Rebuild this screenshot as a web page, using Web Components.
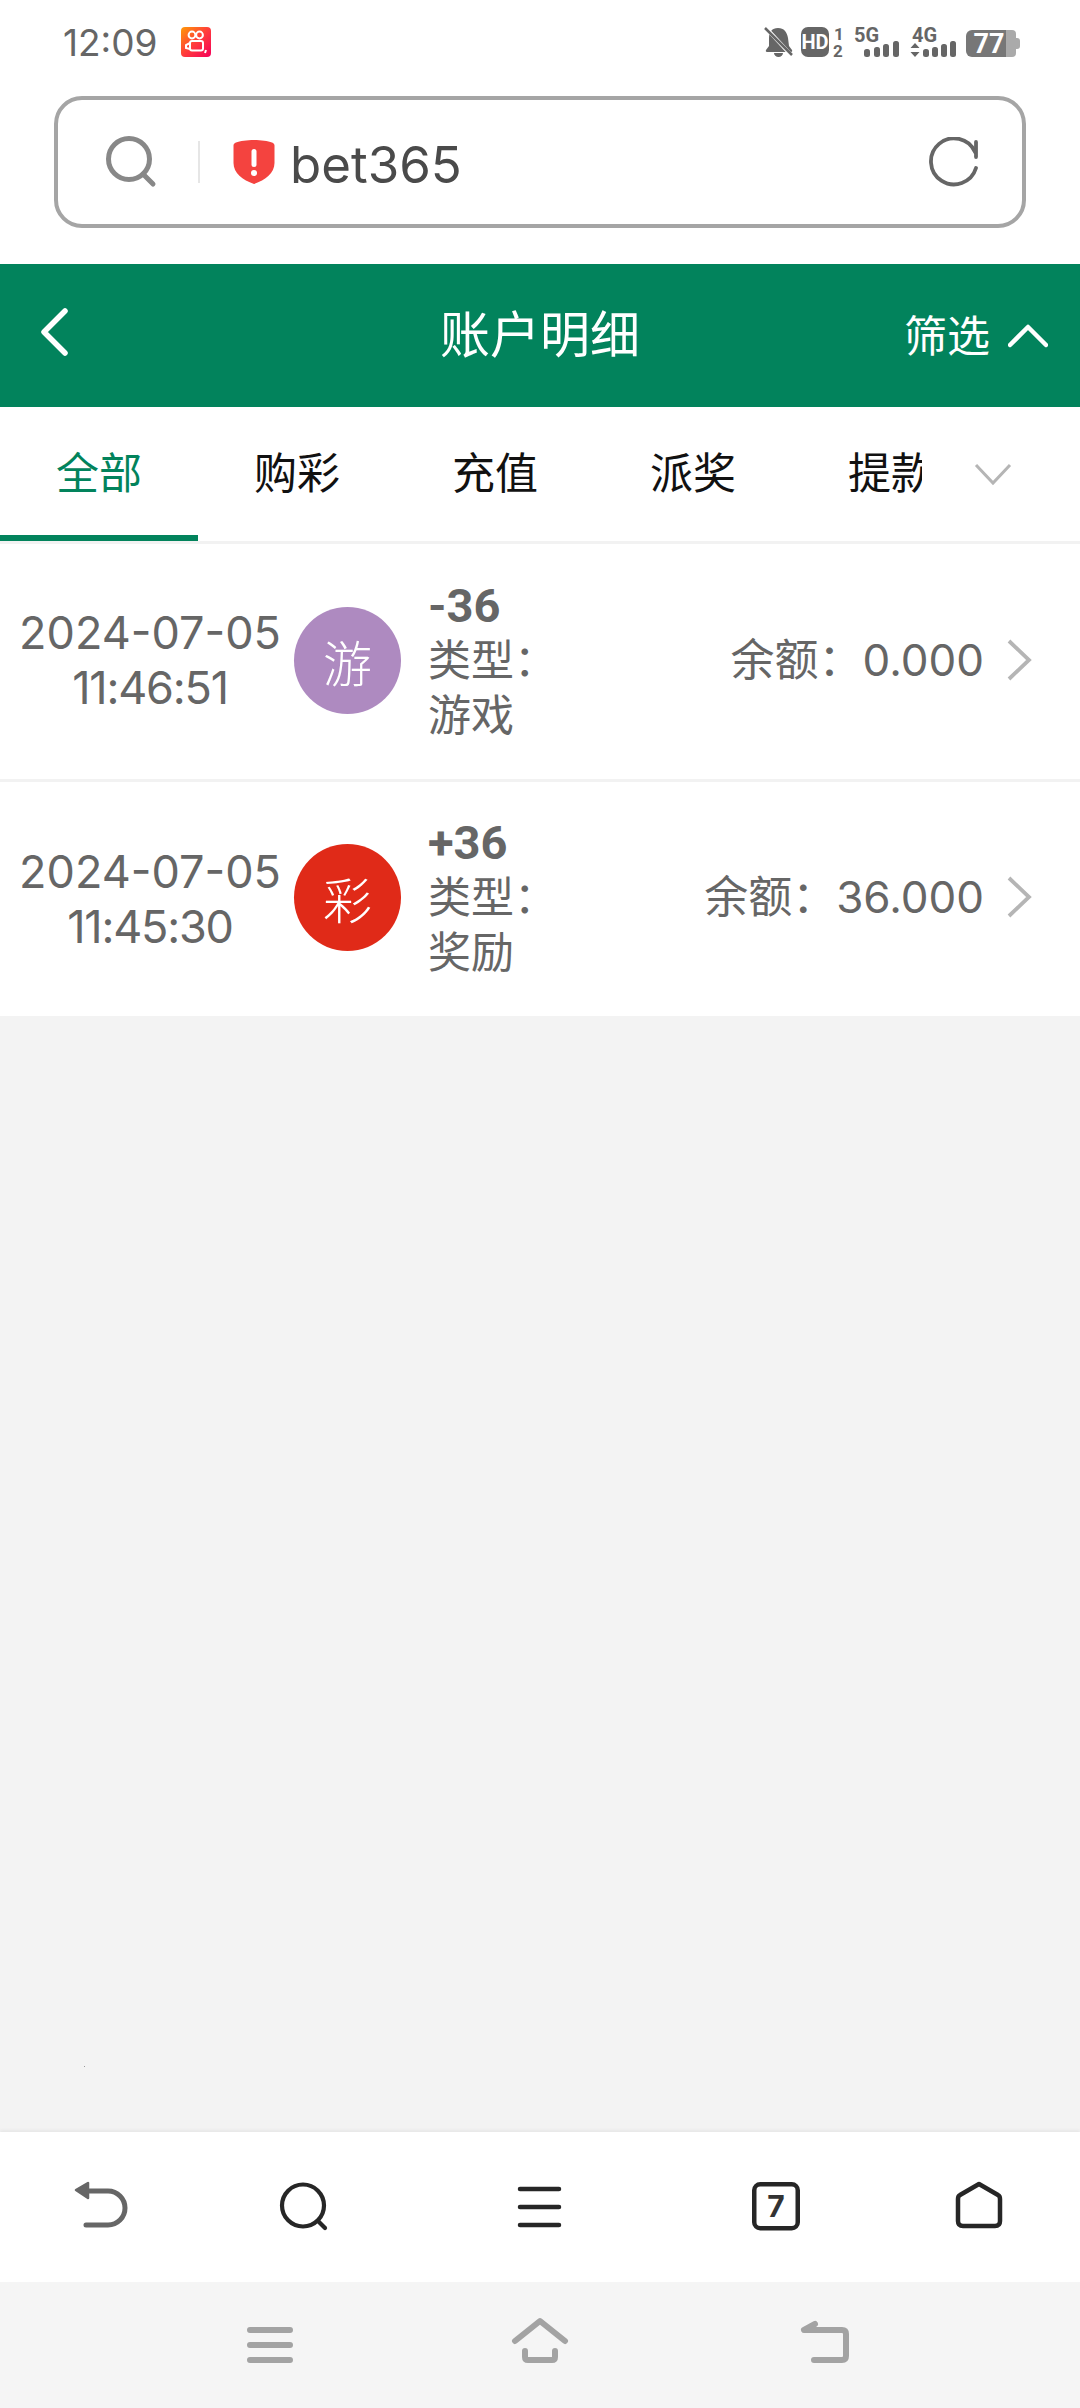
<!DOCTYPE html>
<html lang="zh-CN">
<head>
<meta charset="utf-8">
<title>账户明细</title>
<style>
  html, body { margin: 0; padding: 0; background: #fff; }
  body { width: 1080px; height: 2408px; display: flex; flex-direction: column; overflow: hidden;
         font-family: Inter, "Noto Sans CJK SC", sans-serif; color: #666; }
</style>
</head>
<body>
<status-bar></status-bar>
<url-bar></url-bar>
<app-header></app-header>
<tab-strip></tab-strip>
<record-list>
  <record-row color="#ae8ac0" glyph="游">
    <span slot="date">2024-07-05</span><span slot="time">11:46:51</span>
    <span slot="amount">-36</span><span slot="kind">游戏</span><span slot="balance">0.000</span>
  </record-row>
  <record-row color="#e02a18" glyph="彩">
    <span slot="date">2024-07-05</span><span slot="time">11:45:30</span>
    <span slot="amount">+36</span><span slot="kind">奖励</span><span slot="balance">36.000</span>
  </record-row>
</record-list>
<browser-bar></browser-bar>
<system-nav></system-nav>
<script>
function def(name, css, html) {
  customElements.define(name, class extends HTMLElement {
    constructor() {
      super();
      const tpl = document.createElement('template');
      tpl.innerHTML = '<style>' + css + '</style>' + (typeof html === 'function' ? html(this) : html);
      this.attachShadow({ mode: 'open' }).appendChild(tpl.content.cloneNode(true));
    }
  });
}
const CJK = 'Inter, "Noto Sans CJK SC", sans-serif';

def('status-bar', `
  :host { display: flex; align-items: center; height: 30px; padding: 27px 60px 39px 63px; font-family: ${CJK}; flex: none; }
  .time { font-size: 37px; line-height: 32px; color: #666; width: 118px; padding-top: 2px; }
  svg { display: block; overflow: visible; }
  .sp { flex: 1; }
`, `
  <span class="time">12:09</span>
  <svg width="30" height="30" viewBox="0 0 30 30">
    <defs><linearGradient id="k" x1="0" y1="0" x2="1" y2="1"><stop offset="0" stop-color="#ff9a05"/><stop offset=".5" stop-color="#ff3c3c"/><stop offset="1" stop-color="#f5005a"/></linearGradient></defs>
    <rect width="30" height="30" rx="4" fill="url(#k)"/>
    <g fill="none" stroke="#fff" stroke-width="2">
      <circle cx="11" cy="8" r="3.4"/><circle cx="18.5" cy="8" r="3.4"/>
      <rect x="9" y="14" width="13" height="9.500" rx="2"/><path d="M9 16l-4 2v3l4 1"/><path d="M25 23l-1 3"/>
    </g>
  </svg>
  <span class="sp"></span>
  <svg width="255" height="30" viewBox="0 0 255 30" font-family="Roboto, sans-serif" font-weight="700">
    <g fill="#666">
      <path d="M13 1c6 0 9 4 10 10l1 8 3 4c.5 1 0 2-1 2H2c-1 0-1.500-1-1-2l3-4v-8c0-6 3-10 9-10z"/>
      <path d="M9 26a4.500 4 0 0 0 9 0z"/>
      <rect x="36" y="0" width="28" height="30" rx="7"/>
    </g>
    <path d="M2 2l24 26" stroke="#fff" stroke-width="4"/>
    <path d="M0 1l27 27" stroke="#666" stroke-width="2.500"/>
    <text x="50" y="22" font-size="20" fill="#fff" text-anchor="middle">HD</text>
    <g fill="#666" font-size="17">
      <text x="69" y="13">1</text><text x="68" y="30">2</text>
    </g>
    <g fill="#666" font-size="20">
      <text x="89" y="15">5G</text>
      <text x="147" y="15">4G</text>
    </g>
    <g fill="#666">
      <rect x="99" y="22" width="6" height="8" rx="2.500"/><rect x="109" y="20" width="6" height="10" rx="2.500"/><rect x="118" y="17" width="6" height="13" rx="2.500"/><rect x="128" y="14" width="6" height="16" rx="2.500"/>
      <path d="M150 16l4.500 5h-9zM150 30l4.500-5h-9z"/>
      <rect x="158" y="22" width="6" height="8" rx="2.500"/><rect x="167" y="20" width="6" height="10" rx="2.500"/><rect x="176" y="17" width="6" height="13" rx="2.500"/><rect x="185" y="14" width="6" height="16" rx="2.500"/>
    </g>
    <path d="M207 3h34v27h-34a6 6 0 0 1-6-6V9a6 6 0 0 1 6-6z" fill="#777"/>
    <path d="M241 3h6a4 4 0 0 1 4 4v19a4 4 0 0 1-4 4h-6z" fill="#aaa"/>
    <path d="M251 11h1a3 3 0 0 1 3 3v5a3 3 0 0 1-3 3h-1z" fill="#aaa"/>
    <text x="224" y="26" font-size="27" fill="#fff" text-anchor="middle">77</text>
  </svg>
`);

def('url-bar', `
  :host { display: flex; align-items: center; box-sizing: border-box; height: 132px; margin: 0 54px 36px; border: 4px solid #a5a5a5; border-radius: 28px; padding: 0 44px 0 47px; flex: none; font-family: Inter, sans-serif; background: #fff; }
  svg { display: block; flex: none; }
  .div { width: 2px; height: 42px; background: #e6e6e6; margin: 0 33px 0 41px; flex: none; }
  .site { font-size: 51px; line-height: 60px; color: #4a4a4a; margin-left: 15px; flex: 1; padding-top: 6px; }
`, `
  <svg width="52" height="52" viewBox="0 0 52 52" fill="none" stroke="#888" stroke-linecap="round" stroke-width="5"><circle cx="24" cy="23" r="20.500"/><path d="M38 38l10 10"/></svg>
  <span class="div"></span>
  <svg width="42" height="44" viewBox="0 0 42 44"><path d="M21 0c7 0 14 1 18 2.500 1.500.5 2.500 1.500 2.500 3V23c0 10-9 17-20.500 21C9.500 40 .5 33 .5 23V5.500c0-1.500 1-2.500 2.500-3C7 1 14 0 21 0z" fill="#f4433f"/><rect x="18.500" y="9" width="5" height="18" rx="2.500" fill="#fff"/><circle cx="21" cy="33" r="3" fill="#fff"/></svg>
  <span class="site">bet365</span>
  <svg width="50" height="50" viewBox="0 0 50 50" fill="none" stroke="#666" stroke-width="3.800" stroke-linecap="round"><path d="M48 5v15"/><path d="M48 31A23 23 0 1 1 47 15"/></svg>
`);

def('app-header', `
  :host { display: grid; grid-template-columns: 1fr auto 1fr; align-items: center; height: 143px; background: #02835c; color: #fff; flex: none; font-family: ${CJK}; }
  .l { padding: 0 0 8px 41px; }
  .t { font-size: 50px; line-height: 60px; font-weight: 400; padding-bottom: 2px; }
  .r { display: flex; align-items: center; justify-content: flex-end; padding-right: 32px; gap: 18px; font-size: 43px; line-height: 60px; }
  svg { display: block; }
`, `
  <div class="l"><svg width="28" height="48" viewBox="0 0 28 48" fill="none" stroke="#fff" stroke-width="5.500" stroke-linecap="round" stroke-linejoin="round"><path d="M24 3L3 24l21 21"/></svg></div>
  <div class="t">账户明细</div>
  <div class="r"><span>筛选</span><svg width="40" height="24" viewBox="0 0 40 24" fill="none" stroke="#fff" stroke-width="4.500" stroke-linecap="round" stroke-linejoin="round"><path d="M2 21L20 3l18 18"/></svg></div>
`);

def('tab-strip', `
  :host { display: flex; align-items: stretch; height: 137px; box-sizing: border-box; border-bottom: 3px solid #f2f2f2; flex: none; font-family: ${CJK}; background: #fff; }
  .tabs { width: 922px; display: flex; overflow: hidden; flex: none; }
  .tab { flex: 0 0 198px; box-sizing: border-box; height: 134px; display: flex; align-items: center; justify-content: center; font-size: 43px; color: #111; padding-bottom: 3px; border-bottom: 6px solid transparent; }
  .tab.on { color: #02835c; border-bottom-color: #02835c; }
  .more { flex: 1; display: flex; align-items: center; padding-left: 52px; }
  svg { display: block; }
`, `
  <div class="tabs"><div class="tab on">全部</div><div class="tab">购彩</div><div class="tab">充值</div><div class="tab">派奖</div><div class="tab">提款</div></div>
  <div class="more"><svg width="38" height="24" viewBox="0 0 38 24" fill="none" stroke="#b5b5b5" stroke-width="3"><path d="M2 3l17 18L36 3"/></svg></div>
`);

def('record-list', `
  :host { display: block; flex: 1; background: #f3f3f3; position: relative; }
  .speck { position: absolute; left: 84px; top: 1522px; width: 1px; height: 1px; background: #999; }
`, `<slot></slot><i class="speck"></i>`);

def('record-row', `
  :host { display: flex; align-items: center; box-sizing: border-box; height: 238px; background: #fff; padding: 0 48px 3px 6px; font-family: ${CJK}; color: #666; }
  :host(:not(:last-child)) { border-bottom: 3px solid #f2f2f2; }
  :host(:last-child) { height: 234px; padding-bottom: 4px; }
  :host(:last-child) .when { padding-top: 3px; }
  .when { width: 288px; flex: none; display: flex; flex-direction: column; align-items: center; font-size: 45px; line-height: 55px; }
  .tm { letter-spacing: -1.2px; }
  .av { width: 107px; height: 107px; border-radius: 50%; flex: none; display: flex; align-items: center; justify-content: center; color: #fff; font-size: 49px; font-weight: 300; margin-right: 27px; }
  .mid { flex: 1; font-size: 43px; line-height: 55px; min-width: 0; }
  .amt { font: 700 47px/55px Roboto, sans-serif; display: block; color: #666; }
  .line { display: block; white-space: nowrap; }
  .bal { font-size: 44px; line-height: 55px; white-space: nowrap; margin-right: 23px; }
  svg { display: block; flex: none; }
`, h => `
  <div class="when"><slot name="date"></slot><div class="tm"><slot name="time"></slot></div></div>
  <div class="av" style="background:${h.getAttribute('color')}">${h.getAttribute('glyph')}</div>
  <div class="mid"><span class="amt"><slot name="amount"></slot></span><span class="line">类型：</span><span class="line"><slot name="kind"></slot></span></div>
  <div class="bal">余额：<slot name="balance"></slot></div>
  <svg width="25" height="42" viewBox="0 0 25 42" fill="none" stroke="#b5b5b5" stroke-width="3.800"><path d="M2 2l20 19L2 40"/></svg>
`);

def('browser-bar', `
  :host { display: grid; grid-template-columns: 200px 206px 267px 206px 200px; align-items: center; justify-items: center; height: 150px; background: #fff; box-shadow: 0 -2px 3px rgba(0,0,0,.05); flex: none; position: relative; }
  svg { display: block; }
`, `
  <svg width="60" height="60" viewBox="0 0 60 60" fill="none" stroke="#666" stroke-width="5" stroke-linecap="round"><path d="M6 13l12-7v15z" fill="#666" stroke-width="2.500" stroke-linejoin="round"/><path d="M18 14h20a17 17 0 0 1 0 34H16"/></svg>
  <svg width="60" height="60" viewBox="0 0 60 60" fill="none" stroke="#262626" stroke-width="4.200" stroke-linecap="round"><circle cx="30" cy="28.500" r="21"/><path d="M45 44l7 7"/></svg>
  <svg width="60" height="60" viewBox="0 0 60 60" fill="none" stroke="#262626" stroke-width="4.500" stroke-linecap="round"><path d="M10 12h39M10 30h39M10 48h39"/></svg>
  <svg width="60" height="60" viewBox="0 0 60 60" fill="none" stroke="#262626" stroke-width="4.500"><rect x="8.250" y="7.250" width="43.500" height="44" rx="6"/><text x="30" y="40" font-family="Inter, sans-serif" font-size="30" font-weight="700" fill="#333" stroke="none" text-anchor="middle">7</text></svg>
  <svg width="60" height="60" viewBox="0 0 60 60" fill="none" stroke="#262626" stroke-width="4.500" stroke-linejoin="round"><path d="M30 7l19 11q2 1 2 4v22q0 5-5 5H14q-5 0-5-5V22q0-3 2-4z"/></svg>
`);

def('system-nav', `
  :host { display: flex; align-items: center; height: 126px; padding-left: 235px; gap: 200px; background: #f5f5f5; flex: none; }
  svg { display: block; }
  svg:last-child { margin-left: 15px; }
`, `
  <svg width="70" height="60" viewBox="0 0 70 60" fill="none" stroke="#a3a3a3" stroke-width="6" stroke-linecap="round"><path d="M15 15h40M15 30h40M15 45h40"/></svg>
  <svg width="70" height="60" viewBox="0 0 70 60" fill="none" stroke="#a3a3a3" stroke-width="6" stroke-linecap="round" stroke-linejoin="round"><path d="M10 26L35 6l25 20"/><path d="M20 36v6q0 3 3 3h24q3 0 3-3v-6"/></svg>
  <svg width="70" height="60" viewBox="0 0 70 60" fill="none" stroke="#a3a3a3" stroke-width="6" stroke-linecap="round" stroke-linejoin="round"><path d="M25 9L14 15h38q4 0 4 4v22q0 4-4 4H24"/></svg>
`);
</script>
</body>
</html>
